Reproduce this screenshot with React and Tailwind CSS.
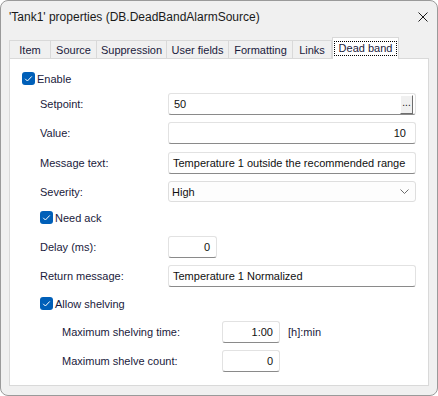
import React from 'react';

const tabs = [
  { name: 'Item', w: 'w-[41px]' },
  { name: 'Source', w: 'w-[46px]' },
  { name: 'Suppression', w: 'w-[70px]' },
  { name: 'User fields', w: 'w-[62px]' },
  { name: 'Formatting', w: 'w-[64px]' },
  { name: 'Links', w: 'w-[40px]' },
];

function CheckBox({ label }) {
  return (
    <div className="flex items-center h-[13px]">
      <div className="w-[13px] h-[13px] rounded-[3px] bg-[#005fb8] flex items-center justify-center">
        <svg width="13" height="13" viewBox="0 0 13 13">
          <path d="M3.2 6.8 L5.4 9 L9.8 4.4" fill="none" stroke="#ffffff" strokeWidth="1" />
        </svg>
      </div>
      <span className="ml-[2px] pt-[1px] text-[#1a1a3c]">{label}</span>
    </div>
  );
}

function Field({ value, className = '', align = 'left', children }) {
  return (
    <div
      className={`h-[22px] bg-white border border-[#e2e2e2] border-b-[#8a8a8a] rounded-[3px] flex items-center text-[#111] ${className}`}
    >
      <span className={align === 'right' ? 'flex-1 text-right pt-[1px]' : 'flex-1 pt-[1px]'}>{value}</span>
      {children}
    </div>
  );
}

export default function App() {
  return (
    <div
      className="w-[438px] h-[396px] bg-[#f0f0f0] border border-[#9a9a9a] rounded-[8px] flex flex-col text-[11px] leading-none overflow-hidden"
      style={{ fontFamily: '"Liberation Sans", Arial, sans-serif' }}
    >
      {/* title bar */}
      <div className="h-[30px] flex items-center justify-between pl-[8px] pr-[9px] shrink-0">
        <span className="text-[12px] text-[#1a1a1a] pt-[1px]">'Tank1' properties (DB.DeadBandAlarmSource)</span>
        <svg width="10" height="10" viewBox="0 0 10 10" className="mt-[1px]">
          <path d="M0.5 0.5 L9.5 9.5 M9.5 0.5 L0.5 9.5" stroke="#1a1a1a" strokeWidth="1" />
        </svg>
      </div>

      {/* tabs */}
      <div className="mt-[6px] h-[21px] flex items-end px-[8px] shrink-0">
        {tabs.map((t, i) => (
          <div
            key={t.name}
            className={`${t.w} h-[18px] flex items-center justify-center pt-[2px] border-t border-l border-[#d9d9d9] bg-[#f0f0f0] text-[#1a1a3c] ${
              i === tabs.length - 1 ? 'border-r' : ''
            }`}
          >
            {t.name}
          </div>
        ))}
        <div className="relative z-10 w-[67px] h-[22px] -mb-[1px] bg-white border-t border-l border-r border-[#d9d9d9] flex items-center justify-center">
          <span className="border border-dotted border-black px-[4px] h-[15px] flex items-center pt-[1px] text-[#1a1a3c] mb-[1px]">
            Dead band
          </span>
        </div>
      </div>

      {/* panel */}
      <div className="mx-[8px] h-[328px] bg-white border border-[#d9d9d9] flex flex-col shrink-0">
        <div className="mt-[13px] pl-[12px]">
          <CheckBox label="Enable" />
        </div>

        <div className="mt-[8px] flex items-center pl-[30px] pr-[12px]">
          <span className="w-[128px] pt-[1px] text-[#1a1a3c]">Setpoint:</span>
          <Field value="50" className="flex-1 pl-[5px] pr-[2px]">
            <div className="w-[13px] h-[19px] bg-[#f0f0f0] border border-t-white border-l-white border-r-[#6e6e6e] border-b-[#6e6e6e] flex items-end justify-center pb-[5px] text-[10px]">
              ...
            </div>
          </Field>
        </div>

        <div className="mt-[7px] flex items-center pl-[30px] pr-[12px]">
          <span className="w-[128px] pt-[1px] text-[#1a1a3c]">Value:</span>
          <Field value="10" align="right" className="flex-1 pl-[5px] pr-[9px]" />
        </div>

        <div className="mt-[8px] flex items-center pl-[30px] pr-[12px]">
          <span className="w-[128px] pt-[1px] text-[#1a1a3c]">Message text:</span>
          <Field value="Temperature 1 outside the recommended range" className="flex-1 pl-[4px]" />
        </div>

        <div className="mt-[7px] flex items-center pl-[30px] pr-[12px]">
          <span className="w-[128px] pt-[1px] text-[#1a1a3c]">Severity:</span>
          <div className="flex-1 h-[21px] bg-[#fdfdfd] border border-[#dedede] rounded-[3px] flex items-center pl-[3px] pr-[6px] text-[#111]">
            <span className="flex-1 pt-[1px]">High</span>
            <svg width="9" height="5" viewBox="0 0 9 5">
              <path d="M0.5 0.5 L4.5 4.5 L8.5 0.5" fill="none" stroke="#6b6b6b" strokeWidth="1" />
            </svg>
          </div>
        </div>

        <div className="mt-[9px] pl-[30px]">
          <CheckBox label="Need ack" />
        </div>

        <div className="mt-[12px] flex items-center pl-[30px]">
          <span className="w-[128px] pt-[1px] text-[#1a1a3c]">Delay (ms):</span>
          <Field value="0" align="right" className="w-[49px] pr-[6px]" />
        </div>

        <div className="mt-[7px] flex items-center pl-[30px] pr-[12px]">
          <span className="w-[128px] pt-[1px] text-[#1a1a3c]">Return message:</span>
          <Field value="Temperature 1 Normalized" className="flex-1 pl-[4px]" />
        </div>

        <div className="mt-[10px] pl-[30px]">
          <CheckBox label="Allow shelving" />
        </div>

        <div className="mt-[11px] flex items-center pl-[52px]">
          <span className="w-[160px] pt-[1px] text-[#1a1a3c]">Maximum shelving time:</span>
          <Field value="1:00" align="right" className="w-[58px] pr-[6px]" />
          <span className="ml-[8px] pt-[1px] text-[#1a1a3c]">[h]:min</span>
        </div>

        <div className="mt-[7px] flex items-center pl-[52px]">
          <span className="w-[160px] pt-[1px] text-[#1a1a3c]">Maximum shelve count:</span>
          <Field value="0" align="right" className="w-[58px] pr-[6px]" />
        </div>
      </div>
    </div>
  );
}
